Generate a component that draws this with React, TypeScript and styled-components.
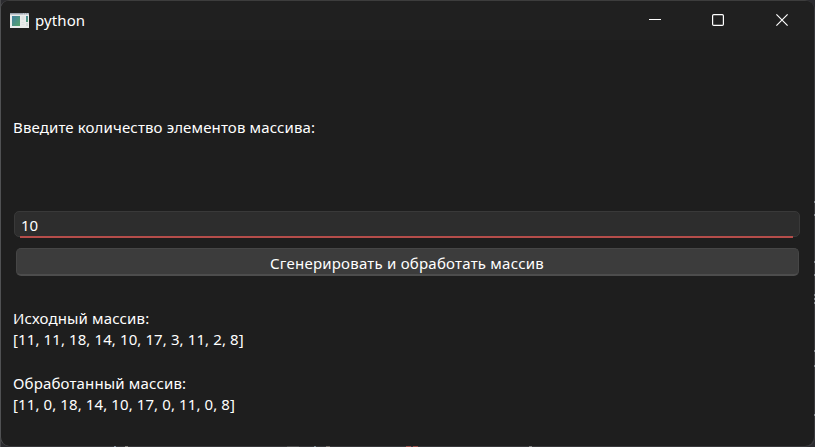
import React from "react";
import styled, { createGlobalStyle } from "styled-components";

const GlobalStyle = createGlobalStyle`
  * { box-sizing: border-box; }
  html, body { margin: 0; background: #303035; overflow: hidden; }
`;

const Desktop = styled.div`
  width: 815px;
  height: 447px;
  background:
    linear-gradient(#c05048, #c05048) 406px 446px / 5px 1px no-repeat,
    linear-gradient(#c05048, #c05048) 413px 446px / 5px 1px no-repeat,
    linear-gradient(#8ba0ad, #8ba0ad) 314px 446px / 2px 1px no-repeat,
    linear-gradient(#8b8078, #8b8078) 326px 446px / 4px 1px no-repeat,
    linear-gradient(#9fb0c0, #9fb0c0) 114px 446px / 2px 1px no-repeat,
    linear-gradient(#a5a098, #a5a098) 125px 446px / 3px 1px no-repeat,
    linear-gradient(#a0a0a0, #a0a0a0) 529px 446px / 3px 1px no-repeat,
    linear-gradient(#505050, #505050) 287px 446px / 12px 1px no-repeat,
    linear-gradient(#a0a8b0, #a0a8b0) 814px 201px / 1px 2px no-repeat,
    linear-gradient(#a0a8b0, #a0a8b0) 814px 214px / 1px 2px no-repeat,
    linear-gradient(#a0a8b0, #a0a8b0) 814px 261px / 1px 2px no-repeat,
    linear-gradient(#a0a8b0, #a0a8b0) 814px 274px / 1px 2px no-repeat,
    linear-gradient(#a0a8b0, #a0a8b0) 814px 294px / 1px 2px no-repeat,
    linear-gradient(#a0a8b0, #a0a8b0) 814px 298px / 1px 2px no-repeat,
    linear-gradient(#a0a8b0, #a0a8b0) 814px 302px / 1px 2px no-repeat,
    linear-gradient(#a0a8b0, #a0a8b0) 814px 350px / 1px 2px no-repeat,
    linear-gradient(#a0a8b0, #a0a8b0) 814px 365px / 1px 2px no-repeat,
    linear-gradient(#a0a8b0, #a0a8b0) 814px 414px / 1px 2px no-repeat,
    linear-gradient(90deg, #48494b 1px, #2b2b2f 1px);
`;

const Window = styled.div`
  display: flex;
  flex-direction: column;
  width: 814px;
  height: 446px;
  border: 1px solid #3d3d3d;
  border-left-color: #505153;
  border-right: 0;
  border-bottom: 0;
  border-radius: 9px;
  box-shadow: 1px 1px 0 rgba(80, 80, 84, 0.35);
  background: #1e1e1e;
  color: #fff;
  font: 15px/22px "Noto Sans", "Open Sans", sans-serif;
`;

const TitleBar = styled.header`
  display: flex;
  align-items: center;
  height: 39px;
  padding-left: 9px;
  border-radius: 8px 8px 0 0;
  background: #202020;
`;

const Text = styled.span<{ $spacing: number }>`
  display: block;
  white-space: pre;
  letter-spacing: ${(p) => p.$spacing}px;
`;

const Title = styled.div`
  flex: 1;
  margin: -2px 0 0 6px;
`;

const Controls = styled.div`
  display: flex;
  gap: 51px;
  margin: -1px 26px 0 0;
`;

const Control = styled.button`
  display: flex;
  padding: 0;
  border: 0;
  background: none;
  color: #fff;
  &:last-child {
    margin-left: 1px;
  }
`;

const Body = styled.main`
  display: flex;
  flex-direction: column;
  padding: 0 14px 0 12px;
`;

const Prompt = styled.label`
  height: 171px;
  padding-top: 76px;
`;

const Field = styled.div`
  position: relative;
  height: 26px;
  margin: 0 0 0 1px;
  padding: 2px 6px;
  border: 1px solid #393939;
  border-radius: 5px;
  background: #2d2d2d;
  &::after {
    content: "";
    position: absolute;
    left: 5px;
    right: 6px;
    bottom: -2px;
    height: 2px;
    background: #b54d4a;
  }
`;

const Submit = styled.button`
  display: flex;
  justify-content: center;
  align-items: flex-start;
  height: 28px;
  margin: 11px 1px 0 3px;
  padding: 4px 1px 0 0;
  border: 1px solid #464646;
  border-bottom: 2px solid #4d4d4d;
  border-radius: 5px;
  background: #3c3c3c;
  color: #fff;
  font: inherit;
  line-height: 20px;
`;

const Result = styled.section<{ $top: number }>`
  margin-top: ${(p) => p.$top}px;
  line-height: 21px;
`;

const AppIcon = () => (
  <svg width="19" height="15" viewBox="0 0 19 15">
    <defs>
      <linearGradient id="pane" x1="0" y1="0" x2="1" y2="1">
        <stop offset="0" stopColor="#427fa0" />
        <stop offset="1" stopColor="#56a56b" />
      </linearGradient>
    </defs>
    <path fill="#e9eceb" d="M0 0h19v15H0z" />
    <path fill="#9aa3ae" d="M0 0h19v1.5H0z" />
    <path fill="#d8dde2" d="M13 .5h1v1h-1zM15 .5h1v1h-1zM17 .5h1v1h-1z" />
    <path fill="url(#pane)" d="M2 3h8v10H2z" />
    <path fill="#dfe3e3" d="M11.500 3h3v4h-3zM11.500 9h3v1h-3zM11.500 11h3v1h-3z" />
    <path fill="url(#pane)" d="M16 3h2v6h-2z" />
    <path fill="#d3dcda" d="M16 10h2v3h-2z" />
  </svg>
);

export default function App() {
  return (
    <>
      <GlobalStyle />
      <Desktop>
        <Window>
          <TitleBar>
            <AppIcon />
            <Title><Text $spacing={0.1}>python</Text></Title>
            <Controls>
              <Control aria-label="Minimize">
                <svg width="12" height="12"><path d="M0 5.5h12" stroke="currentColor" /></svg>
              </Control>
              <Control aria-label="Maximize">
                <svg width="12" height="12">
                  <rect x=".6" y=".6" width="10.8" height="10.8" rx="1.2" fill="none" stroke="currentColor" strokeWidth="1.2" />
                </svg>
              </Control>
              <Control aria-label="Close">
                <svg width="12" height="12"><path d="M.4.4l11.2 11.2M11.6.4L.4 11.6" stroke="currentColor" strokeWidth="1.15" /></svg>
              </Control>
            </Controls>
          </TitleBar>
          <Body>
            <Prompt><Text $spacing={0.13}>Введите количество элементов массива:</Text></Prompt>
            <Field><Text $spacing={0}>10</Text></Field>
            <Submit><Text $spacing={0.22}>Сгенерировать и обработать массив</Text></Submit>
            <Result $top={32}>
              <Text $spacing={0.14}>Исходный массив:</Text>
              <Text $spacing={0.1}>[11, 11, 18, 14, 10, 17, 3, 11, 2, 8]</Text>
            </Result>
            <Result $top={23}>
              <Text $spacing={0.15}>Обработанный массив:</Text>
              <Text $spacing={0.1}>[11, 0, 18, 14, 10, 17, 0, 11, 0, 8]</Text>
            </Result>
          </Body>
        </Window>
      </Desktop>
    </>
  );
}
